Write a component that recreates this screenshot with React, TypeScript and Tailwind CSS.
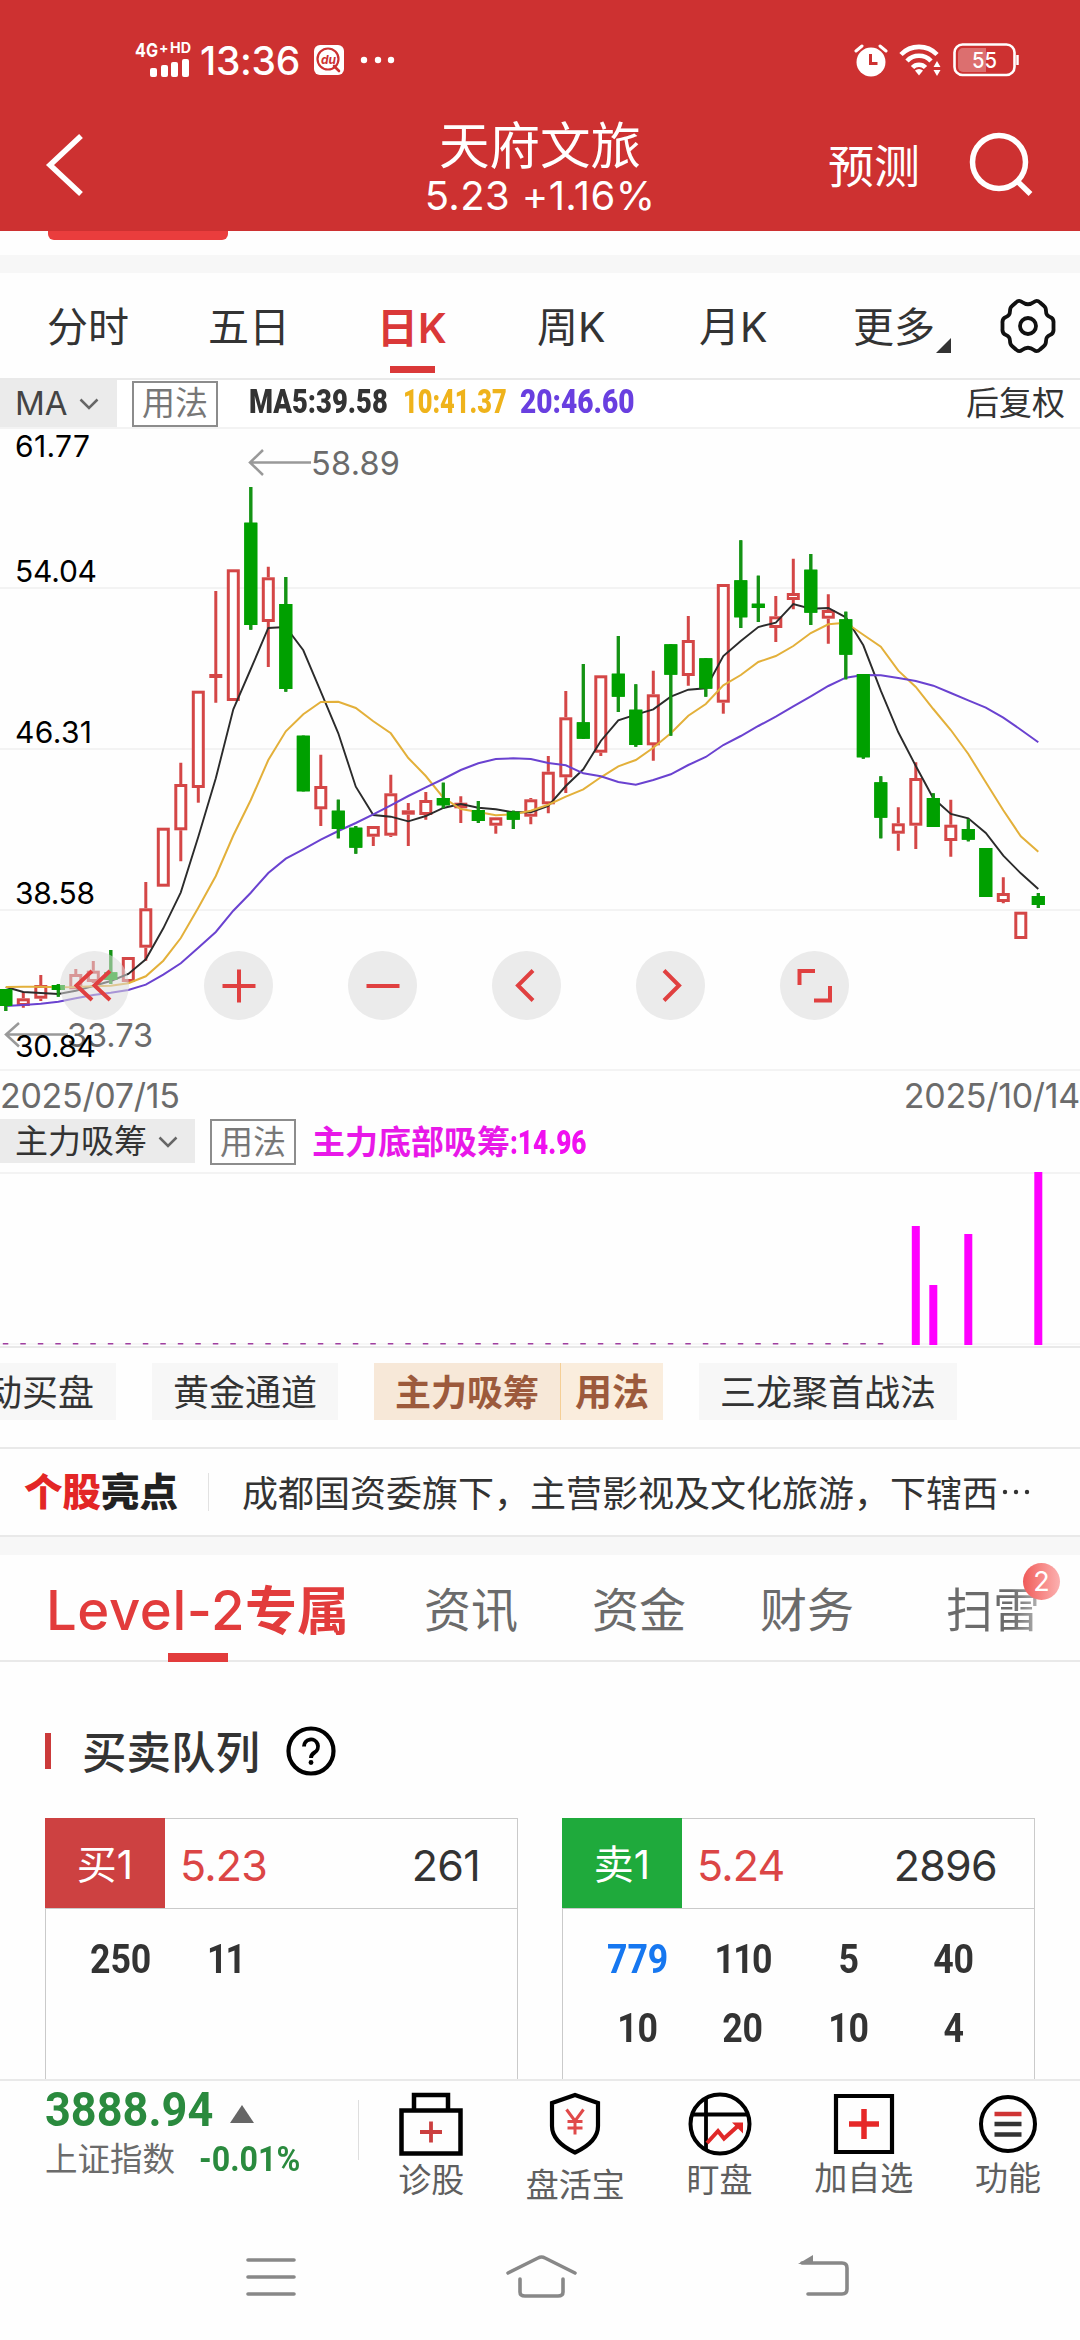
import { ReactNode } from "react";

type TCandle = {
    up: boolean;
    high: number;
    top: number;
    bottom: number;
    low: number;
};

const CHART_TOP = 427;
const STEP = 17.5;
const toX = (index: number) => 5.8 + index * STEP;

const c = (
    kind: "r" | "g",
    high: number,
    top: number,
    bottom: number,
    low: number
): TCandle => ({ up: kind === "r", high, top, bottom, low });

const candles: TCandle[] = [
    c("g", 989, 989, 1006, 1011),
    c("r", 992, 998.3, 1006, 1007.7),
    c("r", 975, 985, 998.7, 1001),
    c("g", 984, 985, 990, 996.7),
    c("r", 969, 974, 989.3, 989.3),
    c("r", 961, 970.7, 982, 983),
    c("g", 950, 972.3, 980, 984),
    c("r", 957, 957, 982, 982.7),
    c("r", 882, 908.3, 947.7, 960.7),
    c("r", 827.7, 827.7, 886.7, 886.7),
    c("r", 762.7, 784, 830.3, 861.3),
    c("r", 690.7, 690.7, 788, 802.7),
    c("r", 591, 674, 678, 702.7),
    c("r", 569.3, 569.3, 701, 701),
    c("g", 487, 522.7, 625, 629.7),
    c("r", 566.7, 577.3, 622, 667),
    c("g", 577, 604, 689, 691.7),
    c("g", 735.7, 735.7, 791.3, 791.3),
    c("r", 754.7, 786, 809.3, 826),
    c("g", 799.7, 810.7, 829, 838.3),
    c("g", 826, 827.7, 847.7, 853.7),
    c("r", 826, 826, 836.7, 846),
    c("r", 774.7, 793.3, 835.7, 837),
    c("r", 803, 810.3, 814.7, 846),
    c("r", 792, 800, 815, 819.7),
    c("g", 782.7, 798, 805.3, 808.3),
    c("r", 796.3, 802.7, 808.3, 823),
    c("g", 801, 810, 821, 823),
    c("r", 817.3, 817.3, 825.7, 833.7),
    c("g", 810.7, 811.7, 819.7, 829),
    c("r", 798, 799.3, 816.7, 824.3),
    c("r", 756, 771.7, 804.3, 813.3),
    c("r", 691, 717.3, 777.3, 793),
    c("g", 664, 722.3, 738.7, 738.7),
    c("r", 675.3, 675.3, 752.7, 756),
    c("g", 636, 673.7, 696.7, 712),
    c("g", 684.3, 709.7, 745, 746.7),
    c("r", 670.7, 694.3, 745.3, 760.7),
    c("g", 644.3, 644.3, 674.7, 735.7),
    c("r", 616, 640, 676, 685.7),
    c("g", 658.3, 658.3, 688.7, 696.7),
    c("r", 584, 584, 702.7, 713.7),
    c("g", 540.3, 580.3, 617.3, 628),
    c("g", 575.7, 603.7, 608, 622),
    c("r", 596, 616.3, 628, 642),
    c("r", 558.7, 593, 600, 609.3),
    c("g", 554, 569.7, 612.7, 625),
    c("r", 594.3, 610, 618.7, 643.7),
    c("g", 611.7, 619.3, 654.7, 679.3),
    c("g", 674, 674, 757.3, 758.7),
    c("g", 776.3, 782.3, 817.7, 838.3),
    c("r", 807.3, 823.3, 833.7, 850.7),
    c("r", 762.3, 778, 825.7, 849),
    c("g", 793.3, 798, 827, 827),
    c("r", 799.7, 824.7, 841, 856.7),
    c("g", 819, 829, 839.7, 841.3),
    c("g", 848, 848, 897, 897),
    c("r", 877.3, 893, 902, 903.3),
    c("r", 911.7, 911.7, 939, 939),
    c("g", 893, 896, 905, 908),
];

const ma5 = [
    987, 992, 993, 994, 990.7, 986, 981, 974, 959.3, 928.3, 892.3, 836.7, 778.3,
    709.3, 669, 628, 627, 650.3, 691.7, 733.3, 786.7, 815, 816.7, 821.3, 816,
    808, 804, 807.7, 809.3, 812.3, 812.3, 806, 786, 769.3, 741, 720.3, 714.7,
    709.3, 696.7, 689.7, 688.3, 656, 641, 627, 622.7, 604, 608.7, 608, 617.3,
    645.3, 690.7, 732.3, 766, 798.3, 814, 818.3, 833, 855.7, 873.3, 889,
];

const ma10 = [
    987, 986.7, 986.7, 987.3, 987, 986.3, 985.7, 983.3, 976.3, 960.7, 938, 907.7,
    876, 835.5, 800, 760, 731.3, 714.3, 702, 701.7, 708, 721.3, 733.3, 758, 776,
    797.7, 809, 812, 815.3, 814.3, 810.7, 804.7, 796.7, 789.3, 777.3, 766.3, 760,
    747.7, 733.3, 715.7, 704, 685.3, 675, 662, 656, 646, 633, 624.3, 622.7,
    634.7, 646.7, 670.7, 687, 709, 730, 754, 782.3, 810.3, 836.3, 851.7,
];

const ma20 = [
    1006, 1005, 1003.7, 1001.7, 998.3, 995, 992.7, 990, 984.7, 974.7, 963.3,
    947.7, 932, 910.7, 892.7, 873, 858.7, 849.3, 839.7, 831, 823, 814.3, 805.3,
    796, 787.3, 779, 770, 763.3, 759, 758.3, 759, 763, 765.3, 773.3, 776.3, 782,
    784.7, 780, 774.3, 765, 757, 745, 736, 726, 716.7, 706.3, 696.3, 686, 677.7,
    675, 675.3, 678, 681, 685.7, 693, 700.3, 707.7, 717.7, 729.7, 742.3,
];

const toPoints = (values: number[]) =>
    values.map((y, i) => `${toX(i)},${y}`).join(" ");

function StatusBar() {
    return (
        <div className="flex h-[120px] items-center pr-[60px] pl-[135px] text-white">
            <svg className="overflow-visible" width="56" height="38" viewBox="0 0 56 38" fill="#fff">
                <text x="0" y="16" fontSize="19" fontWeight="700" textLength="23" lengthAdjust="spacingAndGlyphs">4G</text>
                <text x="24" y="12" fontSize="14" fontWeight="700">+</text>
                <text x="35" y="12" fontSize="14" fontWeight="700" textLength="21" lengthAdjust="spacingAndGlyphs">HD</text>
                <rect x="15" y="27" width="7" height="9" rx="2" />
                <rect x="26" y="24" width="7" height="12" rx="2" />
                <rect x="36" y="21" width="7" height="15" rx="2" />
                <rect x="47" y="18" width="7" height="18" rx="2" />
            </svg>
            <span className="ml-[9px] w-[100px] text-[39px] leading-none font-medium tracking-[-0.3px] whitespace-nowrap">
                13:36
            </span>
            <svg className="ml-[14px]" width="30" height="30" viewBox="0 0 30 30">
                <rect width="30" height="30" rx="6" fill="#fff" />
                <circle cx="14" cy="14" r="10.500" fill="none" stroke="#cd3131" strokeWidth="2.2" />
                <path d="M20 21l5 5" stroke="#cd3131" strokeWidth="2.6" strokeLinecap="round" />
                <text x="7" y="18.500" fontSize="12" fontWeight="700" fontStyle="italic" fill="#cd3131">du</text>
            </svg>
            <svg className="ml-[16px]" width="36" height="8" viewBox="0 0 36 8" fill="#fff">
                <circle cx="4" cy="4" r="3.2" />
                <circle cx="18" cy="4" r="3.2" />
                <circle cx="31" cy="4" r="3.2" />
            </svg>
            <svg className="ml-auto" width="34" height="34" viewBox="0 0 34 34">
                <circle cx="17" cy="19" r="14.500" fill="#fff" />
                <path d="M2 8l6-5M32 8l-6-5" stroke="#fff" strokeWidth="3" strokeLinecap="round" />
                <path d="M16.500 11v9.500h7" fill="none" stroke="#cd3131" strokeWidth="3" />
            </svg>
            <svg className="ml-[11px]" width="42" height="34" viewBox="0 0 42 34" fill="none" stroke="#fff" strokeWidth="4.600">
                <path d="M2 11.500a25 25 0 0 1 36 0" />
                <path d="M8 18a16.500 16.500 0 0 1 24 0" />
                <path d="M13.500 24.500a9 9 0 0 1 13 0" />
                <path d="M16 27.500l4 5 4-5a6 6 0 0 0-8 0z" fill="#fff" stroke="none" />
                <path d="M34.500 24l3.500-6 3.500 6zM34.500 27l3.500 6 3.500-6z" fill="#fff" stroke="none" />
            </svg>
            <svg className="ml-[12px]" width="67" height="34" viewBox="0 0 67 34">
                <rect x="1.500" y="1.500" width="60" height="30.500" rx="8" fill="none" stroke="#fff" strokeWidth="2.600" />
                <path d="M10 5h23v24H10a5 5 0 0 1-5-5V10a5 5 0 0 1 5-5z" fill="#fff" opacity="0.3" />
                <path d="M64.500 12v10" stroke="#fff" strokeWidth="2.500" />
                <text x="31.500" y="24.500" fontSize="22" fontWeight="500" fill="#fff" textAnchor="middle" textLength="25" lengthAdjust="spacingAndGlyphs">55</text>
            </svg>
        </div>
    );
}

function Header() {
    return (
        <header className="h-[231px] bg-[#cd3131] text-white">
            <StatusBar />
            <div className="grid h-[111px] grid-cols-3">
                <div className="flex items-start pt-[13px] pl-[45px]">
                    <svg width="40" height="64" viewBox="0 0 40 64" fill="none" stroke="#fff" strokeWidth="5.500">
                        <path d="M36 3L5 32l31 29" />
                    </svg>
                </div>
                <div className="flex flex-col items-center">
                    <h1 className="pt-[1px] text-[50.500px] leading-[50px]">天府文旅</h1>
                    <p className="mt-[5px] text-[40px] leading-[40px] tracking-[0.4px] whitespace-nowrap">
                        5.23 +1.16%
                    </p>
                </div>
                <div className="flex items-start justify-end pr-[45px]">
                    <span className="pt-[23px] text-[46px] leading-[46px]">预测</span>
                    <svg className="mt-[11px] ml-[49px]" width="66" height="66" viewBox="0 0 66 66" fill="none" stroke="#fff" strokeWidth="5.500">
                        <circle cx="30" cy="31" r="26.500" />
                        <path d="M48 50l13.500 13" />
                    </svg>
                </div>
            </div>
        </header>
    );
}

function PeriodTabs() {
    return (
        <nav className="flex h-[107px] items-center border-b-2 border-[#e9e9e9] text-[41px] leading-none whitespace-nowrap text-[#333]">
            <span className="ml-[47px] w-[161px] pt-[4px]">分时</span>
            <span className="w-[170px] pt-[4px]">五日</span>
            <span className="flex w-[68px] flex-col items-center pt-[29px] font-semibold text-[#da3838]">
                日K
                <i className="mt-[17px] h-[7px] w-[45px] bg-[#da3838]" />
            </span>
            <span className="ml-[91px] w-[162px] pt-[4px]">周K</span>
            <span className="w-[154px] pt-[4px]">月K</span>
            <span className="pt-[4px]">更多</span>
            <svg className="mt-[40px] ml-[1px]" width="15" height="15" viewBox="0 0 15 15">
                <path d="M15 0v15H0z" fill="#333" />
            </svg>
            <svg className="ml-[49px]" width="56" height="56" viewBox="0 0 56 56" fill="none" stroke="#111" strokeWidth="3.800" strokeLinejoin="round">
                <path d="M16 4.500Q19 1.500 22 4Q28 8.500 34 4Q37 1.500 40 4.500L44 8Q46 9.500 46 13Q46 17.500 50 19Q54 20.500 53.500 25V31Q54 35.500 50 37Q46 38.500 46 43Q46 46.500 44 48L40 51.500Q37 54.500 34 52Q28 47.500 22 52Q19 54.500 16 51.500L12 48Q10 46.500 10 43Q10 38.500 6 37Q2 35.500 2.500 31V25Q2 20.500 6 19Q10 17.500 10 13Q10 9.500 12 8Z" />
                <circle cx="28" cy="28" r="8" />
            </svg>
        </nav>
    );
}

function Chevron() {
    return (
        <svg width="20" height="12" viewBox="0 0 20 12" fill="none" stroke="#666" strokeWidth="2.500">
            <path d="M1.500 1.500l8.500 8.500 8.500-8.500" />
        </svg>
    );
}

function UsageButton() {
    return (
        <span className="ml-[15px] flex h-[46px] w-[86px] items-center justify-center border-2 border-[#8c8c8c] text-[33px] leading-none text-[#777]">
            用法
        </span>
    );
}

function MaRow() {
    return (
        <div className="flex h-[47px] items-center bg-white leading-none">
            <span className="flex h-[47px] w-[117px] items-center gap-[11px] bg-[#ebebeb] pl-[15px] text-[33px] text-[#444]">
                MA
                <Chevron />
            </span>
            <UsageButton />
            <span className="flex pb-[4px] font-['Roboto'] text-[33px] font-bold whitespace-nowrap">
                <b className="ml-[31px] w-[154px] origin-left scale-x-[0.83] text-[#333]">MA5:39.58</b>
                <b className="w-[117px] origin-left scale-x-[0.77] text-[#efb31b]">10:41.37</b>
                <b className="w-[130px] origin-left scale-x-[0.85] text-[#693fe0]">20:46.60</b>
            </span>
            <span className="mr-[15px] ml-auto text-[33px] text-[#333]">后复权</span>
        </div>
    );
}

function Candle({ index, data }: { index: number; data: TCandle }) {
    const x = toX(index);
    if (!data.up) {
        return (
            <g fill="#00a000">
                <rect x={x - 1.5} y={data.high} width="3" height={data.low - data.high} fill="#149314" />
                <rect x={x - 6.5} y={data.top} width="13" height={data.bottom - data.top} />
            </g>
        );
    }
    const height = data.bottom - data.top;
    return (
        <g stroke="#d44646" strokeWidth="3" fill="none">
            <path d={`M${x} ${data.high}V${data.top}M${x} ${data.bottom}V${data.low}`} />
            {height > 5.8 ? (
                <rect x={x - 5} y={data.top + 1.5} width="10" height={height - 3} fill="#fff" />
            ) : (
                <rect x={x - 6.5} y={data.top} width="13" height={height} fill="#d44646" stroke="none" />
            )}
        </g>
    );
}

const controls: { name: string; icon: ReactNode }[] = [
    { name: "rewind", icon: <path d="M32 20L16.500 34.500 32 49M50 20L34.500 34.500 50 49" /> },
    { name: "zoomIn", icon: <path d="M18.500 35h33M35 18.500v33" /> },
    { name: "zoomOut", icon: <path d="M18.500 35h33" /> },
    { name: "prev", icon: <path d="M41 19.500L26 34.500l15 15" /> },
    { name: "next", icon: <path d="M28 19.500l15 15-15 15" /> },
    { name: "expand", icon: <path d="M19.500 34V20H35M50 35v14.500H34" /> },
];

function KLineChart() {
    return (
        <div className="relative h-[644px]">
            <svg width="1080" height="644" viewBox={`0 ${CHART_TOP} 1080 644`}>
                {[428, 588, 749, 910, 1070].map((y) => (
                    <path key={y} d={`M0 ${y}H1080`} stroke="#f3f3f3" strokeWidth="2" />
                ))}
                {candles.map((data, i) => (
                    <Candle key={i} index={i} data={data} />
                ))}
                <polyline points={toPoints(ma5)} fill="none" stroke="#2b2b2b" strokeWidth="1.9" />
                <polyline points={toPoints(ma10)} fill="none" stroke="#e3b03a" strokeWidth="2" />
                <polyline points={toPoints(ma20)} fill="none" stroke="#6a42d0" strokeWidth="2" />
                {candles.map((data, i) =>
                    data.up ? null : <Candle key={i} index={i} data={data} />
                )}
                <g fontSize="32.500" fill="#6b6b6b">
                    <path d="M311 462.500H250M263 450l-13 12.500 13 12.500" stroke="#999" strokeWidth="2.500" fill="none" />
                    <text x="311" y="474.500" textLength="89">58.89</text>
                    <path d="M68 1034.500H6M19 1023l-13 11.500 13 12" stroke="#999" strokeWidth="2.500" fill="none" />
                    <text x="67" y="1046.500" textLength="86">33.73</text>
                </g>
                <g fontSize="30" fill="#000">
                    <text x="15" y="457" textLength="75">61.77</text>
                    <text x="15" y="582" textLength="82">54.04</text>
                    <text x="15" y="743" textLength="77">46.31</text>
                    <text x="15" y="904" textLength="80">38.58</text>
                    <text x="15" y="1057" textLength="81">30.84</text>
                </g>
            </svg>
            <div className="absolute top-[524px] left-[60px] flex gap-[75px]">
                {controls.map(({ name, icon }) => (
                    <svg key={name} className="rounded-full bg-[#dbdbdb]/55" width="69" height="69" viewBox="0 0 69 69" fill="none" stroke="#e04040" strokeWidth="4">
                        {icon}
                    </svg>
                ))}
            </div>
        </div>
    );
}

function VolumeChart() {
    const bars = [
        { index: 52, top: 54 },
        { index: 53, top: 113 },
        { index: 55, top: 62 },
        { index: 59, top: 0 },
    ];
    return (
        <svg className="block" width="1080" height="176" viewBox="0 0 1080 176">
            <path d="M0 1H1080" stroke="#f3f3f3" strokeWidth="2" />
            <path d="M0 172H1080" stroke="#f0f0f0" />
            <path d="M0 175H1080" stroke="#e9e9e9" strokeWidth="2" />
            {Array.from({ length: 51 }, (_, i) => (
                <rect key={i} x={toX(i) - 3} y="171" width="5.500" height="1.500" fill="#a03fa0" />
            ))}
            {bars.map(({ index, top }) => (
                <rect key={index} x={toX(index) - 4} y={top} width="8" height={173 - top} fill="#ff00ff" />
            ))}
        </svg>
    );
}

function IndicatorChips() {
    return (
        <div className="flex h-[101px] items-start overflow-hidden border-b-2 border-[#e9e9e9] pt-[15px] text-[36px] leading-[60px] whitespace-nowrap text-[#333]">
            <span className="flex h-[57px] w-[116px] justify-end bg-[#f7f7f7] pr-[22px]">动买盘</span>
            <span className="ml-[36px] h-[57px] w-[186px] bg-[#f7f7f7] text-center">黄金通道</span>
            <span className="ml-[36px] h-[57px] w-[187px] border-r border-[#f5cf96] bg-[#f7e8d8] text-center font-semibold text-[#9c5a3c]">
                主力吸筹
            </span>
            <span className="h-[57px] w-[102px] bg-[#faeddd] text-center text-[37px] font-semibold text-[#9c5a3c]">用法</span>
            <span className="ml-[36px] h-[57px] w-[258px] bg-[#f7f7f7] text-center">三龙聚首战法</span>
        </div>
    );
}

function Highlights() {
    return (
        <div className="flex h-[88px] items-center border-b-2 border-[#e9e9e9] pl-[24px] leading-none text-[#333]">
            <b className="text-[38.500px] font-black text-[#222]">
                <span className="text-[#e32626]">个股</span>亮点
            </b>
            <i className="ml-[30px] h-[38px] w-px bg-[#e2e2e2]" />
            <span className="ml-[33px] pt-[3px] text-[36px] whitespace-nowrap">
                成都国资委旗下，主营影视及文化旅游，下辖西
            </span>
            <svg className="ml-[1px]" width="32" height="6" viewBox="0 0 32 6" fill="#333">
                <circle cx="6" cy="3" r="2.200" />
                <circle cx="17" cy="3" r="2.200" />
                <circle cx="28" cy="3" r="2.200" />
            </svg>
        </div>
    );
}

function InfoTabs() {
    return (
        <nav className="flex h-[107px] items-start border-b-2 border-[#e9e9e9] text-[47px] leading-[48px] whitespace-nowrap text-[#6b6b6b]">
            <span className="ml-[45px] flex w-[305px] flex-col items-center pt-[29px] text-[52px] leading-[52px] font-medium text-[#e23c3c]">
                <span>
                    <span className="text-[54.500px] tracking-[0.6px]">Level-2</span>
                    <span className="font-bold">专属</span>
                </span>
                <i className="mt-[15px] h-[9px] w-[60px] bg-[#e23c3c]" />
            </span>
            <span className="ml-[74px] w-[168px] pt-[31px]">资讯</span>
            <span className="w-[168px] pt-[31px]">资金</span>
            <span className="w-[186px] pt-[31px]">财务</span>
            <span className="relative bg-gradient-to-r from-[#6b6b6b] from-70% to-[#b5b5b5] bg-clip-text pt-[31px] text-transparent">
                扫雷
                <i className="absolute top-[8px] left-[77px] h-[37px] w-[37px] rounded-full bg-gradient-to-r from-[#ef5a5a] to-[#fbb0b0] text-center text-[27px] leading-[37px] text-white not-italic">
                    2
                </i>
            </span>
        </nav>
    );
}

type TQueueProps = {
    label: string;
    price: string;
    total: string;
    color: string;
    orders: { value: string; big?: boolean }[];
};

function OrderQueue({ label, price, total, color, orders }: TQueueProps) {
    return (
        <div className="h-[261px] w-[473px] border border-b-0 border-[#cacaca] leading-none">
            <div className="-mt-px -ml-px flex h-[91px] items-center border-b border-[#cacaca] text-[43px] text-[#333]">
                <span className={`flex h-[90px] w-[120px] items-center justify-center pt-[4px] text-[40px] text-white ${color}`}>
                    {label}
                </span>
                <span className="ml-[15px] pt-[5px] tracking-[-0.8px] text-[#db4545]">{price}</span>
                <span className="mr-[37px] ml-auto pt-[5px] tracking-[-0.7px]">{total}</span>
            </div>
            <div className="mt-[16px] ml-[22px] grid w-[421px] grid-cols-4 text-center font-['Roboto'] text-[41px] leading-[69px] font-bold text-[#333]">
                {orders.map(({ value, big }, i) => (
                    <span
                        key={i}
                        className={`scale-x-[0.87] ${big ? "text-[#1677f0]" : ""} ${value.startsWith("11") ? "tracking-[-2px]" : ""}`}
                    >
                        {value}
                    </span>
                ))}
            </div>
        </div>
    );
}

function QueueSection() {
    return (
        <section className="h-[417px] overflow-hidden pt-[64px]">
            <div className="flex h-[50px] items-center text-[44.500px] leading-none text-[#333]">
                <i className="ml-[45px] h-[36px] w-[6px] bg-[#cb3a3a]" />
                <span className="ml-[31px] pt-[5px] font-medium">买卖队列</span>
                <svg className="ml-[26px]" width="50" height="50" viewBox="0 0 50 50">
                    <circle cx="25" cy="25" r="22.500" fill="none" stroke="#000" strokeWidth="4.200" />
                    <path d="M18 20.500a7 7 0 1 1 10.500 6c-2.500 1.600-3.500 2.600-3.500 5.500" fill="none" stroke="#000" strokeWidth="3.900" />
                    <circle cx="25" cy="36.500" r="2.400" />
                </svg>
            </div>
            <div className="mt-[42px] ml-[45px] flex gap-[44px]">
                <OrderQueue
                    label="买1"
                    price="5.23"
                    total="261"
                    color="bg-[#cd4141]"
                    orders={[{ value: "250" }, { value: "11" }]}
                />
                <OrderQueue
                    label="卖1"
                    price="5.24"
                    total="2896"
                    color="bg-[#1faa3c]"
                    orders={[
                        { value: "779", big: true },
                        { value: "110" },
                        { value: "5" },
                        { value: "40" },
                        { value: "10" },
                        { value: "20" },
                        { value: "10" },
                        { value: "4" },
                    ]}
                />
            </div>
        </section>
    );
}

const actions: { label: string; className: string; icon: ReactNode }[] = [
    {
        label: "诊股",
        className: "pt-[8px]",
        icon: (
            <>
                <path d="M2.500 18.500h59v43h-59zM15 18.500V3h34v15.500" stroke="#000" strokeWidth="4.500" />
                <path d="M21 40h22M32 29.500v21" stroke="#cb3f3f" strokeWidth="3.800" />
            </>
        ),
    },
    {
        label: "盘活宝",
        className: "pt-[13px]",
        icon: (
            <>
                <path d="M32 3L9 11v23c0 12 9 20 23 26.500C46 54 55 46 55 34V11z" stroke="#000" strokeWidth="4.200" />
                <path d="M23.500 17.500L32 29l8.500-11.500M32 29v13.500M24.500 29.500h15M24.500 36h15" stroke="#e04a4a" strokeWidth="3" />
            </>
        ),
    },
    {
        label: "盯盘",
        className: "pt-[8px]",
        icon: (
            <>
                <circle cx="32" cy="32" r="29.500" stroke="#000" strokeWidth="4" />
                <path d="M3 22.500h58M18 6v51" stroke="#000" strokeWidth="3.800" />
                <path d="M19 51l11-12 6 7.500L51 33" stroke="#e02828" strokeWidth="4" />
                <path d="M44 30.500h11v11z" fill="#e02828" />
            </>
        ),
    },
    {
        label: "加自选",
        className: "pt-[6px]",
        icon: (
            <>
                <path d="M4 4h56v56H4z" stroke="#000" strokeWidth="4.200" />
                <path d="M17 32h30M32 17v30" stroke="#e62828" strokeWidth="5.500" />
            </>
        ),
    },
    {
        label: "功能",
        className: "pt-[6px]",
        icon: (
            <>
                <circle cx="32" cy="32" r="27" stroke="#000" strokeWidth="4" />
                <path d="M18.500 22h27" stroke="#cf3434" strokeWidth="4.500" />
                <path d="M18.500 32h27M18.500 42.500h27" stroke="#333" strokeWidth="4.500" />
            </>
        ),
    },
];

function BottomBar() {
    return (
        <footer className="flex h-[129px] items-start border-t-2 border-[#e9e9e9] leading-none">
            <div className="w-[359px] pt-[3px] pl-[45px] font-['Roboto','Noto_Sans_CJK_SC'] font-bold text-[#2a8a3e]">
                <div className="flex h-[50px] items-center">
                    <span className="w-[184px] origin-left scale-x-[0.92] text-[49px]">3888.94</span>
                    <svg className="mt-[10px] ml-[1px]" width="24" height="18" viewBox="0 0 24 18">
                        <path d="M12 0l12 18H0z" fill="#666" />
                    </svg>
                </div>
                <div className="mt-[9px] flex h-[34px] items-center">
                    <span className="pt-[1px] text-[32.500px] font-normal text-[#6b6b6b]">上证指数</span>
                    <span className="ml-[24px] origin-left scale-x-[0.92] pb-[2px] text-[35px]">-0.01%</span>
                </div>
            </div>
            <i className="mt-[19px] h-[60px] w-px bg-[#dedede]" />
            <div className="flex flex-1">
                {actions.map(({ label, className, icon }) => (
                    <div key={label} className="flex w-[144.200px] flex-col items-center pt-[11px]">
                        <svg width="64" height="64" viewBox="0 0 64 64" fill="none">
                            {icon}
                        </svg>
                        <span className={`text-[33px] text-[#5f5f5f] ${className}`}>{label}</span>
                    </div>
                ))}
            </div>
        </footer>
    );
}

function SystemNav() {
    return (
        <div className="flex h-[132px] items-start pt-[45px]">
            <svg className="ml-[245px]" width="52" height="46" viewBox="0 0 52 46" stroke="#888" strokeWidth="3.600" strokeLinecap="round">
                <path d="M3 7h46M3 24h46M3 41h46" />
            </svg>
            <svg className="ml-[208px]" width="74" height="46" viewBox="0 0 74 46" fill="none" stroke="#888" strokeWidth="3.600" strokeLinecap="round" strokeLinejoin="round">
                <path d="M3 20L33 5Q36.500 3 40 5L70 20" />
                <path d="M15 26v13q0 4 5 4h33q5 0 5-4V26" />
            </svg>
            <svg className="ml-[218px]" width="54" height="46" viewBox="0 0 54 46" fill="none" stroke="#888" strokeWidth="3.600" strokeLinecap="round">
                <path d="M5 10h40q5 0 5 5v21q0 5-5 5H11" />
                <path d="M1 11L16 2v9z" fill="#888" stroke="none" />
            </svg>
        </div>
    );
}

export default function App() {
    return (
        <div className="h-[2340px] w-[1080px] overflow-hidden bg-[#fefefe] font-['Inter','Noto_Sans_CJK_SC',sans-serif]">
            <Header />
            <div className="h-[24px] pl-[48px]">
                <div className="h-[9px] w-[180px] rounded-b-[6px] bg-[#ea3d3d]" />
            </div>
            <div className="h-[18px] bg-[#f7f7f7]" />
            <PeriodTabs />
            <MaRow />
            <KLineChart />
            <div className="flex h-[48px] items-center justify-between pt-[2px] text-[34px] leading-none tracking-[-0.3px] text-[#6b6b6b]">
                <span>2025/07/15</span>
                <span>2025/10/14</span>
            </div>
            <div className="flex h-[53px] items-start leading-none">
                <span className="flex h-[44px] w-[195px] items-center gap-[11px] bg-[#ebebeb] pt-[1px] pl-[15px] text-[33px] text-[#333]">
                    主力吸筹
                    <Chevron />
                </span>
                <UsageButton />
                <span className="flex h-[46px] items-center pl-[16px] text-[33px] font-bold whitespace-nowrap text-[#e818e8]">
                    主力底部吸筹
                    <b className="origin-left scale-x-[0.77] font-['Roboto'] text-[34px] text-[#f010f0]">:14.96</b>
                </span>
            </div>
            <VolumeChart />
            <IndicatorChips />
            <Highlights />
            <div className="h-[18px] bg-[#f7f7f7]" />
            <InfoTabs />
            <QueueSection />
            <BottomBar />
            <SystemNav />
        </div>
    );
}
